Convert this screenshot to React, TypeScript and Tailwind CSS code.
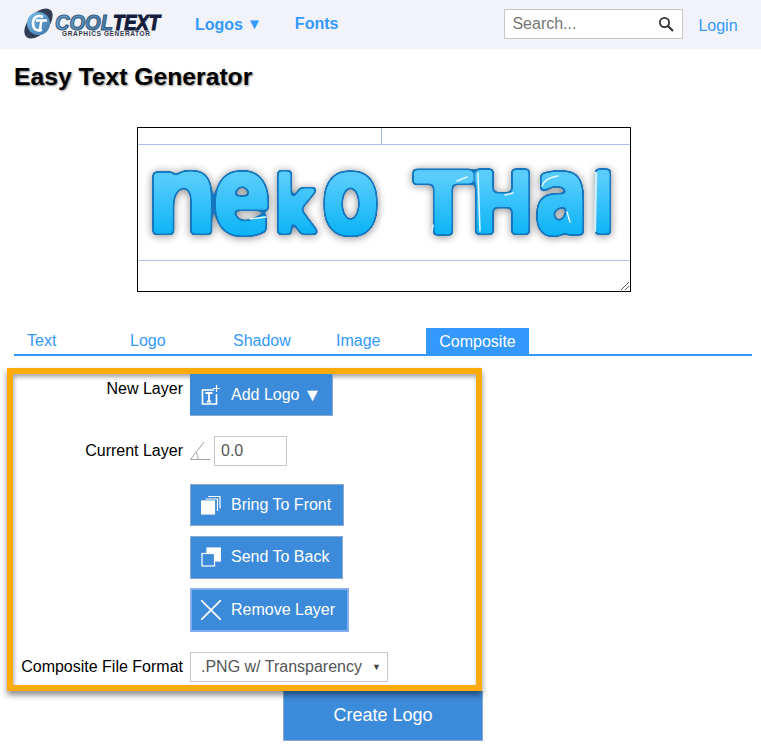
import React from "react";

function CoolLogo() {
  const sans = "'Liberation Sans',sans-serif";
  return (
    <svg width="138" height="38" viewBox="0 0 138 38" className="block overflow-visible">
      <defs>
        <linearGradient id="cool" x1="0" y1="0" x2="1" y2="0">
          <stop offset="0" stopColor="#6aa9d8" />
          <stop offset="1" stopColor="#44789f" />
        </linearGradient>
        <linearGradient id="orb" x1="0" y1="0" x2="1" y2="1">
          <stop offset="0" stopColor="#7cbcea" />
          <stop offset="1" stopColor="#3d76a6" />
        </linearGradient>
      </defs>
      <ellipse cx="14.500" cy="17.500" rx="10" ry="18" transform="rotate(42 14.500 17.500)" fill="#2f3d55" />
      <circle cx="14.500" cy="17.500" r="11.500" fill="url(#orb)" />
      <path d="M19 11c-5-2.500-10 0-10 6.500s5 8 9 6" fill="none" stroke="#fff" strokeWidth="2.600" />
      <path d="M12 14.500h11M17.500 14.500l-2 11" fill="none" stroke="#fff" strokeWidth="2.400" />
      <text x="31" y="23.500" fontFamily={sans} fontWeight="700" fontStyle="italic" fontSize="22" textLength="58" lengthAdjust="spacingAndGlyphs" fill="url(#cool)" stroke="#3a5f82" strokeWidth="1.200">COOL</text>
      <text x="89" y="23.500" fontFamily={sans} fontWeight="700" fontStyle="italic" fontSize="22" textLength="47" lengthAdjust="spacingAndGlyphs" fill="#131c3c" stroke="#131c3c" strokeWidth="1.200">TEXT</text>
      <text x="38" y="30" fontFamily={sans} fontWeight="700" fontSize="6.500" textLength="88" lengthAdjust="spacing" fill="#33384a">GRAPHICS GENERATOR</text>
    </svg>
  );
}

const LETTERS: { c: string; x: number; w: number; s: number }[] = [
  { c: "n", x: 8, w: 72, s: 108 },
  { c: "e", x: 75, w: 58, s: 108 },
  { c: "k", x: 136, w: 41, s: 81 },
  { c: "o", x: 184, w: 57, s: 108 },
  { c: "T", x: 276, w: 58, s: 85 },
  { c: "H", x: 332, w: 65, s: 85 },
  { c: "a", x: 397, w: 53, s: 108 },
  { c: "I", x: 453, w: 24, s: 85 },
];

function NekoThai() {
  const family = "'DejaVu Sans',sans-serif";
  return (
    <svg width="492" height="115" viewBox="0 0 492 115" className="block overflow-visible">
      <defs>
        <linearGradient id="bubble" gradientUnits="userSpaceOnUse" x1="0" y1="24" x2="0" y2="89">
          <stop offset="0" stopColor="#5ccdfb" />
          <stop offset="1" stopColor="#05b2f6" />
        </linearGradient>
        <filter id="goo" x="-5%" y="-20%" width="110%" height="140%" colorInterpolationFilters="sRGB">
          <feMorphology in="SourceGraphic" operator="dilate" radius="5" result="fat" />
          <feMorphology in="SourceAlpha" operator="dilate" radius="2" result="thick" />
          <feGaussianBlur in="thick" stdDeviation="2" result="soft" />
          <feComponentTransfer in="soft" result="outer">
            <feFuncA type="linear" slope="12" intercept="-5" />
          </feComponentTransfer>
          <feComponentTransfer in="soft" result="inner">
            <feFuncA type="linear" slope="12" intercept="-8.500" />
          </feComponentTransfer>
          <feFlood floodColor="#1677c0" />
          <feComposite in2="outer" operator="in" result="edge" />
          <feComposite in="fat" in2="inner" operator="in" result="body" />
          <feGaussianBlur in="outer" stdDeviation="4" result="b" />
          <feOffset in="b" dx="0" dy="1" result="b2" />
          <feComponentTransfer in="b2" result="shadow">
            <feFuncR type="linear" slope="0" />
            <feFuncG type="linear" slope="0" />
            <feFuncB type="linear" slope="0" />
            <feFuncA type="linear" slope="0.45" />
          </feComponentTransfer>
          <feMerge>
            <feMergeNode in="shadow" />
            <feMergeNode in="edge" />
            <feMergeNode in="body" />
          </feMerge>
        </filter>
      </defs>
      <g filter="url(#goo)" fill="url(#bubble)">
        {LETTERS.map((l) => (
          <text key={l.c} x={l.x} y="88" fontFamily={family} fontWeight="700" fontSize={l.s} textLength={l.w} lengthAdjust="spacingAndGlyphs">
            {l.c}
          </text>
        ))}
      </g>
      <g fill="none" stroke="#e2f6fe" strokeWidth="1.500" strokeLinecap="round">
        <path d="M112 74l16-2M319 36l10-4M294 87l1-7M340 28l2 58M367 50l8-2M404 41c2-5 8-9 16-10M429 67l3 10" />
      </g>
      <path d="M458 28l-1 58" stroke="#cdeefb" strokeWidth="2.500" fill="none" strokeLinecap="round" />
    </svg>
  );
}

function Btn({ icon, label, className }: { icon: React.ReactNode; label: React.ReactNode; className: string }) {
  return (
    <button className={`flex items-center bg-[#3c8bdb] text-white text-base ${className}`}>
      <span className="w-[20px] h-[20px] mr-[10px] flex-none">{icon}</span>
      {label}
    </button>
  );
}

const IconAdd = (
  <svg width="20" height="20" viewBox="0 0 20 20" fill="none" stroke="#fff">
    <path d="M13 5H1.500v14h14V9" strokeWidth="1.600" />
    <path d="M15.500 0v7M12 3.500h7" strokeWidth="1.200" />
    <path d="M4.500 8h7M8 8v8.500M6 16.500h4" strokeWidth="1.800" />
  </svg>
);
const IconFront = (
  <svg width="20" height="20" viewBox="0 0 20 20" fill="none" stroke="#fff" strokeWidth="1.200">
    <path d="M7 1.500h12v12" />
    <path d="M4.500 4h12v12" />
    <rect x="0.500" y="6" width="13" height="13" fill="#fff" />
  </svg>
);
const IconBack = (
  <svg width="20" height="20" viewBox="0 0 20 20" fill="none" stroke="#fff" strokeWidth="1.200">
    <rect x="6" y="1" width="13.500" height="13" fill="#fff" />
    <rect x="1" y="6.500" width="12.500" height="12.500" fill="#3c8bdb" />
  </svg>
);
const IconX = (
  <svg width="20" height="20" viewBox="0 0 20 20" fill="none" stroke="#fff" strokeWidth="1.700">
    <path d="M0 0l20 20M20 0L0 20" />
  </svg>
);

export default function App() {
  return (
    <div className="relative w-[761px] h-[750px] bg-white overflow-hidden font-['Liberation_Sans',Arial,sans-serif] text-black">
      <nav className="flex items-center h-[49px] bg-[#f2f3f9]">
        <div className="ml-[24px] w-[138px] flex-none"><CoolLogo /></div>
        <a className="ml-[33px] font-bold text-base text-[#3399ff] flex items-center">Logos<span className="ml-[4px] text-[15px]">▼</span></a>
        <a className="ml-[33px] font-bold text-base text-[#3399ff] mt-[-2px]">Fonts</a>
        <div className="ml-[166px] flex items-center justify-between w-[179px] h-[30px] mt-[-1px] bg-white border border-[#c8c8c8] pl-[7px] pr-[8px] text-base text-[#757575]">
          <span>Search...</span>
          <svg width="16" height="16" viewBox="0 0 16 16" fill="none" stroke="#333">
            <circle cx="6.500" cy="6.500" r="4.600" strokeWidth="1.800" />
            <path d="M10 10l5 5" strokeWidth="2.200" />
          </svg>
        </div>
        <a className="ml-[15px] text-base text-[#3399ff] mt-[2px]">Login</a>
      </nav>

      <h1 className="ml-[14px] mt-[13px] text-[24.7px] leading-[30px] font-bold [text-shadow:1px_1px_2px_#8a8a8a]">Easy Text Generator</h1>

      <div className="relative ml-[137px] mt-[35px] w-[494px] h-[165px] border border-black bg-white">
        <div className="ml-[243px] w-px h-[16px] bg-[#9db9f2]" />
        <div className="h-px bg-[#a9c3f5]" />
        <NekoThai />
        <div className="h-px bg-[#a9c3f5]" />
        <svg width="10" height="10" viewBox="0 0 10 10" className="absolute right-0 bottom-0" stroke="#555" fill="none">
          <path d="M1 9l8-8M5 9l4-4" />
        </svg>
      </div>

      <div className="ml-[14px] mt-[36px] w-[738px] h-[28px] flex items-end border-b-2 border-[#3399ff] text-base text-[#3399ff]">
        <span className="w-[116px] pl-[13px] pb-[1px]">Text</span>
        <span className="w-[103px] pb-[1px]">Logo</span>
        <span className="w-[103px] pb-[1px]">Shadow</span>
        <span className="w-[90px] pb-[1px]">Image</span>
        <span className="w-[103px] h-[26px] bg-[#3399ff] text-white text-center leading-[27px]">Composite</span>
      </div>

      <div className="relative z-10 ml-[7px] mt-[12px] w-[475px] h-[323px] border-[6px] border-[#fbab0a] bg-white shadow-[0_4px_6px_rgba(0,0,0,0.45),inset_1px_3px_4px_rgba(0,0,0,0.35)]">
        <div className="grid grid-cols-[170px_1fr] gap-x-[7px] text-base">
          <span className="text-right leading-[18px] mt-[6px]">New Layer</span>
          <Btn
            icon={IconAdd}
            label={<>Add Logo<span className="ml-[4px] text-[18px] leading-none">▼</span></>}
            className="relative w-[143px] h-[42px] pl-[11px] border-b border-r border-[#8aa9cc]"
          />

          <span className="text-right mt-[26px] leading-[18px] self-start">Current Layer</span>
          <div className="flex items-center mt-[20px] h-[30px]">
            <svg width="20" height="20" viewBox="0 0 20 20" fill="none" stroke="#a3a3a3" className="mr-[4px]">
              <path d="M14 1L0.500 18.500h19.500M6 11.500c1.500 1.500 2 4 2 7" />
            </svg>
            <div className="w-[73px] h-[30px] border border-[#c8c8c8] pl-[6px] leading-[28px] text-[#555]">0.0</div>
          </div>

          <span />
          <Btn icon={IconFront} label="Bring To Front" className="mt-[18px] w-[154px] h-[42px] pl-[10px] border border-[#8aa9cc]" />
          <span />
          <Btn icon={IconBack} label="Send To Back" className="mt-[10px] w-[153px] h-[43px] pl-[10px] pb-[2px] border border-[#8aa9cc]" />
          <span />
          <Btn icon={IconX} label="Remove Layer" className="mt-[9px] w-[159px] h-[44px] pl-[9px] border-2 border-[#84aef0]" />

          <span className="text-right mt-[20px] leading-[30px]">Composite File Format</span>
          <div className="mt-[20px] relative w-[198px] h-[30px] border border-[#c8c8c8] pl-[10px] leading-[28px] text-[#555]">
            .PNG w/ Transparency
            <span className="absolute right-[6px] top-0 text-[9px] text-[#444]">▼</span>
          </div>
        </div>
      </div>

      <button className="block ml-[283px] w-[200px] h-[50px] pb-[2px] bg-[#3c8bdb] border border-[#8aa9cc] border-t-0 text-white text-lg">Create Logo</button>
    </div>
  );
}
